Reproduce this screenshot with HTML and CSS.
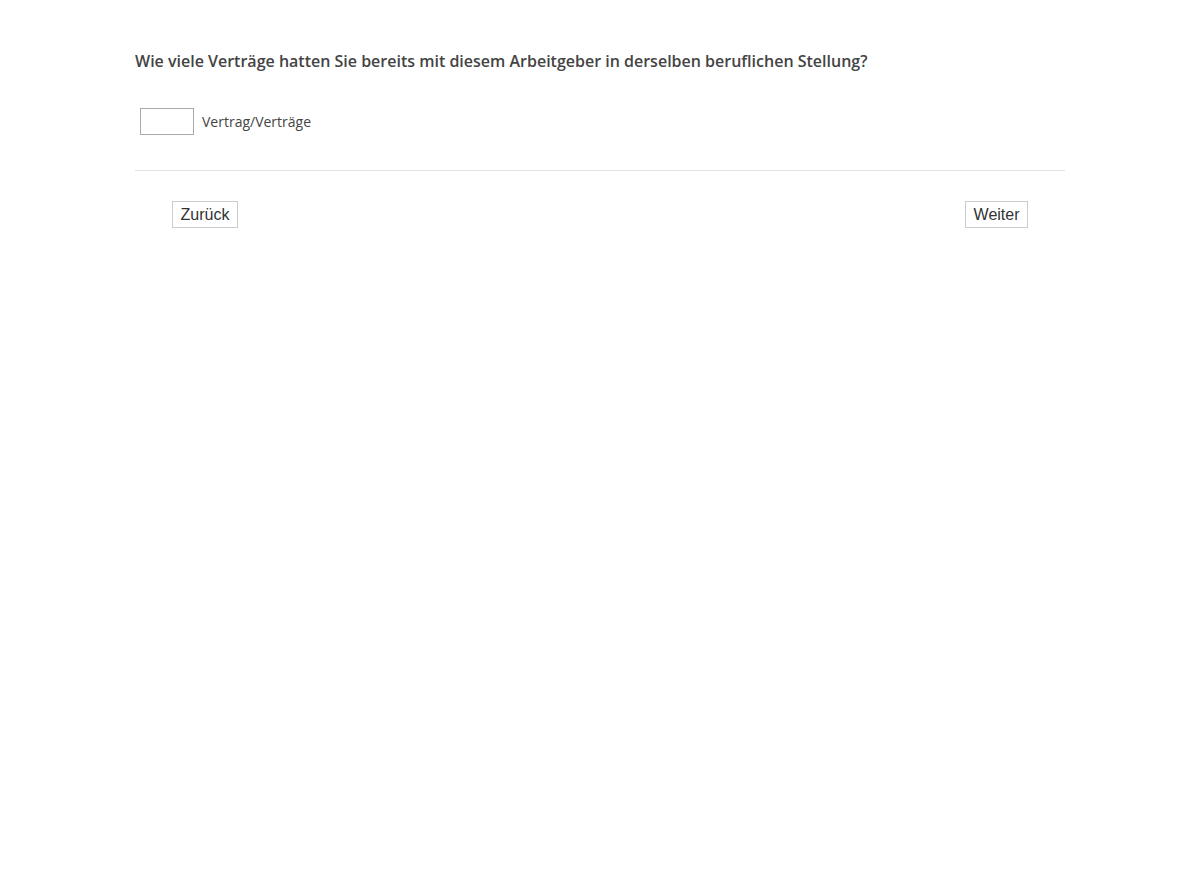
FILE: index.html
```html
<!DOCTYPE html>
<html lang="de">
<head>
<meta charset="utf-8">
<title>Umfrage</title>
<link rel="stylesheet" href="styles.css">
</head>
<body>
<div class="page">
  <div class="question">
    <h2 class="question-text">Wie viele Verträge hatten Sie bereits mit diesem Arbeitgeber in derselben beruflichen Stellung?</h2>
    <div class="answer">
      <input class="num-input" type="text">
      <span class="unit">Vertrag/Verträge</span>
    </div>
  </div>
  <div class="nav">
    <button class="nav-btn">Zurück</button>
    <button class="nav-btn">Weiter</button>
  </div>
</div>
</body>
</html>
```

FILE: styles.css
```css
html, body {
  margin: 0;
  padding: 0;
  background: #fff;
}
body {
  font-family: "Open Sans", "Liberation Sans", sans-serif;
  color: #444;
}
.page {
  width: 930px;
  margin: 0 auto;
  padding-top: 50px;
}
.question {
  border-bottom: 1px solid #e3e3e3;
  padding-bottom: 35px;
}
.question-text {
  margin: 0;
  font-size: 16px;
  font-weight: 600;
  line-height: 22px;
  color: #444;
}
.answer {
  display: flex;
  align-items: center;
  gap: 8px;
  margin-top: 36px;
  padding-left: 5px;
}
.num-input {
  box-sizing: border-box;
  width: 54px;
  height: 27px;
  margin: 0;
  border: 1px solid #aaa;
  border-radius: 0;
  padding: 2px 4px;
  font: 14px "Open Sans", sans-serif;
}
.unit {
  font-size: 14px;
  color: #444;
}
.nav {
  display: flex;
  justify-content: space-between;
  padding: 30px 37px 0;
}
.nav-btn {
  box-sizing: border-box;
  height: 27px;
  margin: 0;
  padding: 0 7.5px;
  background: #fff;
  border: 1px solid #ccc;
  border-radius: 0;
  font-family: "Liberation Sans", Arial, sans-serif;
  font-size: 16px;
  color: #333;
}
```
